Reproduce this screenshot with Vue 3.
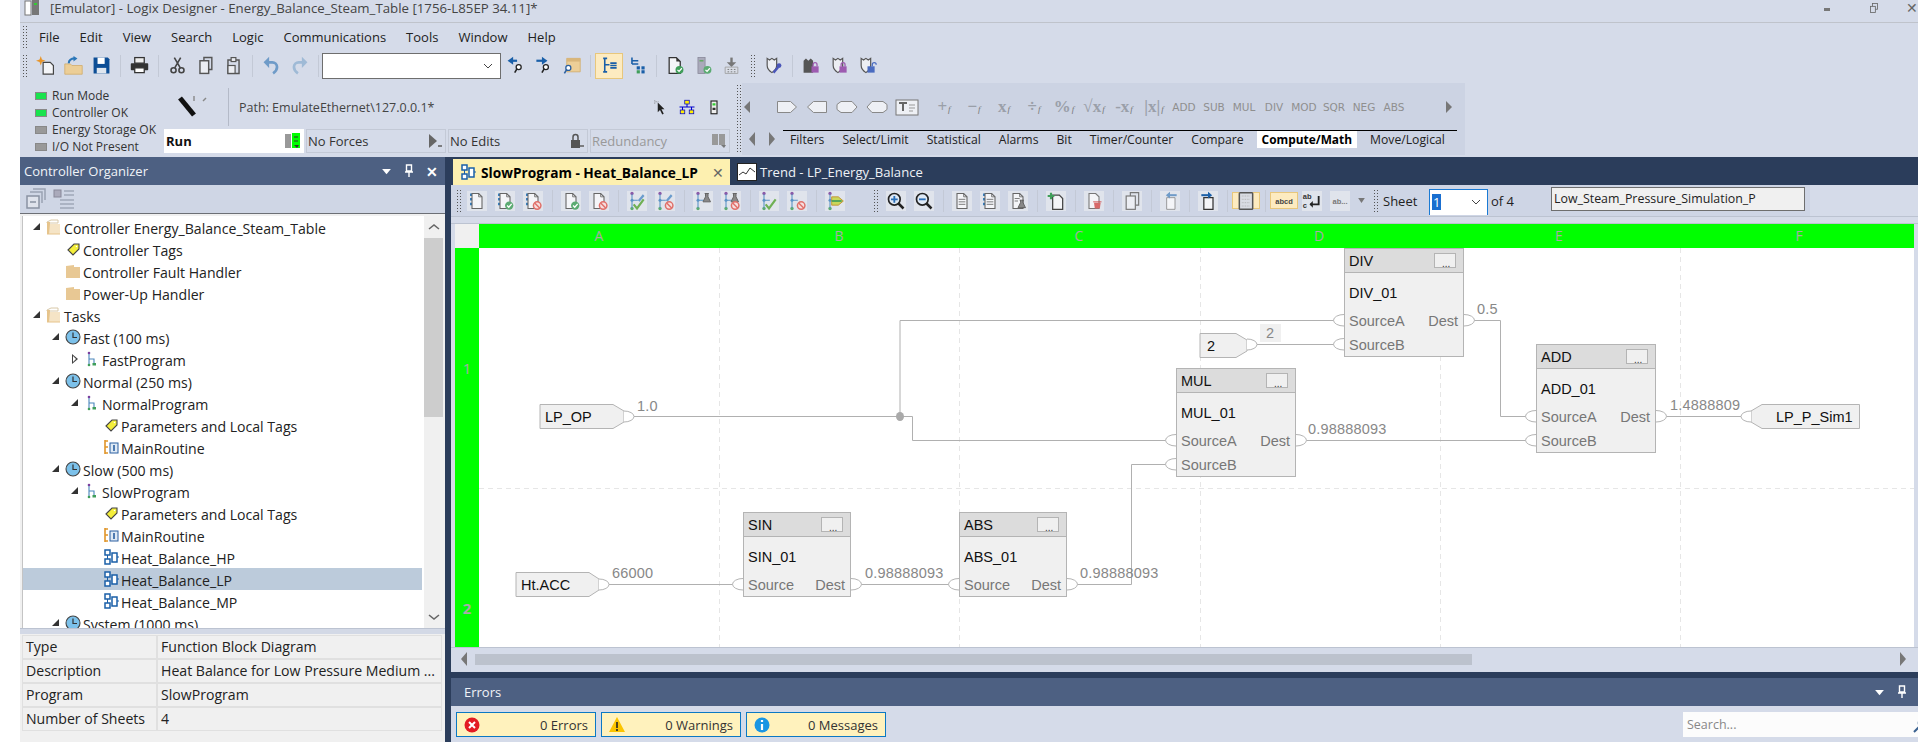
<template>
  <div class="app">
    <div class="window">
      <div class="title">
        <svg class="title-ic" viewBox="0 0 16 16"><rect x="1" y="1" width="6" height="14" fill="#fff" stroke="#777"/><rect x="8" y="0" width="7" height="15" fill="#777"/><rect x="10" y="3" width="3" height="2" fill="#3c3"/></svg>
        <span class="title-text">[Emulator] - Logix Designer - Energy_Balance_Steam_Table [1756-L85EP 34.11]*</span>
        <div class="win-btns">
          <span class="min"></span>
          <svg class="rest" viewBox="0 0 10 12"><rect x="3" y="0.5" width="6" height="7" fill="none" stroke="#666"/><rect x="0.5" y="4" width="6" height="7.5" fill="#d5dbe9" stroke="#666"/></svg>
          <span class="close">✕</span>
        </div>
      </div>

      <div class="menu">
        <span class="grip"></span>
        <span v-for="m in menus" :key="m" class="menu-item">{{ m }}</span>
      </div>

      <div class="toolbar">
        <span class="grip"></span>
        <template v-for="(t, i) in mainTools" :key="i">
          <span v-if="t === '|'" class="sep"></span>
          <span v-else-if="t === '#'" class="grip tool-grip"></span>
          <div v-else-if="t === 'combo'" class="combo"><svg viewBox="0 0 10 6"><path d="M1 1l4 4 4-4" fill="none" stroke="#444"/></svg></div>
          <span v-else class="btn" :class="{ on: t === 'treeSel' }"><svg class="ic" viewBox="0 0 24 24" v-html="icons[t]"></svg></span>
        </template>
      </div>

      <div class="status-row">
        <div class="status">
          <div class="lights">
            <div v-for="l in lights" :key="l.label" class="light"><i :class="{ green: l.on }"></i>{{ l.label }}</div>
          </div>
          <div class="status-main">
            <div class="status-top">
              <svg class="keyswitch" viewBox="0 0 30 24"><path d="M2 3l14 17" stroke="#111" stroke-width="5"/><path d="M16 1v5" stroke="#888" stroke-width="1.4"/><path d="M28 3l-3 3" stroke="#888" stroke-width="1.4"/></svg>
              <span class="vline"></span>
              <span class="path">Path: EmulateEthernet\127.0.0.1*</span>
              <div class="path-icons">
                <svg class="ic" viewBox="0 0 24 24"><path d="M9 6l0 13 3-3 3 6 2-1-3-6 4 0z" fill="#222"/><path d="M5 5h6M5 3v5" stroke="#777" stroke-dasharray="1 1"/></svg>
                <svg class="ic" viewBox="0 0 24 24"><rect x="9" y="3" width="6" height="5" fill="#fe0" stroke="#00c"/><rect x="3" y="16" width="6" height="5" fill="#fe0" stroke="#00c"/><rect x="15" y="16" width="6" height="5" fill="#fe0" stroke="#00c"/><path d="M12 8v4M2 12h20M6 12v4M18 12v4" stroke="#00c" stroke-width="1.4" fill="none"/></svg>
                <svg class="ic" viewBox="0 0 24 24"><rect x="8" y="4" width="8" height="17" fill="#eee" stroke="#222" stroke-width="1.5"/><rect x="10" y="7" width="4" height="3" fill="#3c3"/><rect x="10" y="13" width="4" height="3" fill="#333"/></svg>
              </div>
            </div>
            <div class="status-boxes">
              <div class="sbox run">Run<svg viewBox="0 0 16 16"><rect x="0" y="1" width="6" height="14" fill="#999"/><rect x="7" y="0" width="8" height="15" fill="#0f0"/><path d="M9 4h4M9 8h4" stroke="#333"/><path d="M9 12h5l-2 3z" fill="#333"/></svg></div>
              <div class="sbox">No Forces<svg viewBox="0 0 16 16"><path d="M2 1l8 7-8 7z" fill="#666"/><path d="M11 13h4" stroke="#666" stroke-width="1.6"/></svg></div>
              <div class="sbox">No Edits<svg viewBox="0 0 16 16"><rect x="2" y="7" width="9" height="8" fill="#555"/><path d="M4 7V4a2.5 2.5 0 015 0v3" fill="none" stroke="#555" stroke-width="1.5"/><path d="M11 13h4" stroke="#666" stroke-width="1.6"/></svg></div>
              <div class="sbox off">Redundancy<svg viewBox="0 0 16 16"><rect x="1" y="1" width="6" height="11" fill="#999"/><rect x="8" y="1" width="6" height="11" fill="#999"/><path d="M10 12h5l-2 3z" fill="#777"/></svg></div>
            </div>
          </div>
        </div>
        <span class="grip status-grip"></span>
        <div class="palette">
          <div class="pal-top">
            <span class="tri-left"></span>
            <span v-for="s in shapes" :key="s" class="pal-item"><svg class="ic" viewBox="0 0 24 24" v-html="icons[s]"></svg></span>
            <span class="pal-gap"></span>
            <span v-for="m in mathOps" :key="m" class="pal-item math">{{ m }}<i>f</i></span>
            <span v-for="w in palWords" :key="w" class="pal-item word">{{ w }}</span>
            <span class="tri-right"></span>
          </div>
          <div class="pal-bottom">
            <div class="pal-arrows"><span class="tri-left big"></span><span class="tri-right big"></span></div>
            <div class="pal-tabs">
              <span v-for="t in palTabs" :key="t" class="pal-tab" :class="{ on: t === 'Compute/Math' }">{{ t }}</span>
            </div>
          </div>
        </div>
      </div>

      <div class="workspace">
        <div class="organizer">
          <div class="pane-head">
            <span>Controller Organizer</span>
            <div class="pane-btns">
              <svg viewBox="0 0 12 8" class="pb-arrow"><path d="M1 1h10L6 7z" fill="#fff"/></svg>
              <svg viewBox="0 0 10 14" class="pb-pin"><path d="M2.5 1h5v6h-5zM1 8h8M5 8v5" fill="none" stroke="#fff" stroke-width="1.4"/></svg>
              <span class="pb-x">✕</span>
            </div>
          </div>
          <div class="org-tools">
            <svg class="ic" viewBox="0 0 24 24"><path d="M9 2h12v11M6 5h12v11" fill="none" stroke="#9aa3b3" stroke-width="1.5"/><rect x="3" y="9" width="12" height="12" fill="#dfe3ec" stroke="#8a93a3" stroke-width="1.5"/><path d="M6 15h6" stroke="#8a93a3" stroke-width="1.5"/></svg>
            <svg class="ic" viewBox="0 0 24 24"><rect x="2" y="3" width="7" height="7" fill="#aab" stroke="#889"/><path d="M12 4h10M12 8h10M8 13h14M8 17h14M8 21h14" stroke="#a0a8b8" stroke-width="1.6"/></svg>
          </div>
          <div class="tree-pane">
            <div class="tree">
              <div v-for="(r, i) in treeRows" :key="i" class="row" :class="{ sel: r.sel }" :style="{ paddingLeft: 8 + r.level * 19 + 'px' }">
                <span class="twisty" :class="r.tw"></span>
                <svg class="tree-ic" viewBox="0 0 16 16" v-html="treeIcons[r.icon]"></svg>
                <span class="row-text">{{ r.text }}</span>
              </div>
            </div>
            <div class="vscroll">
              <svg viewBox="0 0 12 8"><path d="M1 6l5-4 5 4" fill="none" stroke="#666" stroke-width="1.6"/></svg>
              <div class="vtrack"><div class="vthumb"></div></div>
              <svg viewBox="0 0 12 8"><path d="M1 2l5 4 5-4" fill="none" stroke="#666" stroke-width="1.6"/></svg>
            </div>
          </div>
          <div class="splitter"></div>
          <div class="props">
            <template v-for="p in props" :key="p[0]">
              <div class="cell">{{ p[0] }}</div>
              <div class="cell">{{ p[1] }}</div>
            </template>
          </div>
        </div>

        <div class="right">
          <div class="tabs">
            <div class="tab active">
              <svg class="tab-ic" viewBox="0 0 16 16" v-html="treeIcons.fbd"></svg>
              <span class="tab-text">SlowProgram - Heat_Balance_LP</span>
              <span class="tab-x">✕</span>
            </div>
            <div class="tab">
              <svg class="trend-ic" viewBox="0 0 20 18"><rect x="0.5" y="0.5" width="19" height="17" fill="#fff" stroke="#222"/><path d="M2 12l4-3 3 2 4-6 5 4" fill="none" stroke="#333"/></svg>
              <span>Trend - LP_Energy_Balance</span>
            </div>
          </div>

          <div class="editor-top">
            <div class="edit-tools">
              <span class="grip"></span>
              <template v-for="(t, i) in editTools" :key="i">
                <span v-if="t === '|'" class="sep"></span>
                <span v-else-if="t === '#'" class="grip tool-grip"></span>
                <span v-else-if="t === '_'" class="tool-end"></span>
                <span v-else class="btn light" :class="{ on: t === 'grid' || t === 'abcd' }"><svg class="ic" viewBox="0 0 24 24" v-html="icons[t]"></svg></span>
              </template>
              <svg class="mini-arrow" viewBox="0 0 8 6"><path d="M0 0h8L4 6z" fill="#777"/></svg>
              <span class="grip tool-grip sheet-grip"></span>
              <span class="sheet-label">Sheet</span>
              <div class="sheet-combo"><b>1</b><svg viewBox="0 0 10 6"><path d="M1 1l4 4 4-4" fill="none" stroke="#444"/></svg></div>
              <span class="sheet-of">of 4</span>
              <div class="sheet-name">Low_Steam_Pressure_Simulation_P</div>
            </div>
          </div>
          <div class="edit-rule"></div>

          <div class="sheet">
            <div class="corner"></div>
            <div class="ruler"><span v-for="c in columns" :key="c">{{ c }}</span></div>
            <div class="row-head"><span>1</span><span class="bold">2</span></div>
            <div class="canvas">
              <svg class="diagram" viewBox="479 248 1435 399" width="1435" height="399">
                <path v-for="x in gridX" :key="x" :d="`M${x} 248V647`" class="gridline" />
                <path d="M479 488.5H1914" class="gridline" />
                <path v-for="(w, i) in wires" :key="i" :d="w" class="wire" />
                <ellipse cx="900" cy="416.5" rx="4" ry="4.5" fill="#aaa" />

                <g v-for="r in refs" :key="r.text">
                  <path :d="r.d" class="ref" />
                  <path :d="r.pin" class="pin" />
                  <text :x="r.tx" :y="r.ty" class="tag">{{ r.text }}</text>
                </g>

                <rect x="1260" y="324" width="21" height="18" fill="#f0f0f0" />
                <text v-for="v in values" :key="v.x + '-' + v.y" :x="v.x" :y="v.y" class="val">{{ v.t }}</text>

                <g v-for="b in blocks" :key="b.name">
                  <rect :x="b.x + 0.5" :y="b.y + 0.5" :width="b.w" :height="b.h" class="block" />
                  <rect :x="b.x + 0.5" :y="b.y + 0.5" :width="b.w" height="24" class="block-head" />
                  <rect :x="b.x + b.w - 28.5" :y="b.y + 5.5" width="21" height="14" class="block-btn" />
                  <text :x="b.x + b.w - 21" :y="b.y + 19" class="dots">...</text>
                  <text :x="b.x + 5" :y="b.y + 18" class="tag">{{ b.name }}</text>
                  <text :x="b.x + 5" :y="b.y + 50" class="tag">{{ b.tag }}</text>
                  <template v-for="p in b.ins" :key="p.l">
                    <path :d="`M${b.x} ${p.y - 5.5}A10 5.5 0 0 0 ${b.x} ${p.y + 6}`" class="pin" />
                    <text :x="b.x + 5" :y="p.y + 6" class="pinlab">{{ p.l }}</text>
                  </template>
                  <path :d="`M${b.x + b.w + 1} ${b.out - 5.5}A10 5.5 0 0 1 ${b.x + b.w + 1} ${b.out + 6}`" class="pin" />
                  <text :x="b.x + b.w - 5" :y="b.out + 6" class="pinlab end">Dest</text>
                </g>
              </svg>
            </div>
          </div>

          <div class="hscroll">
            <span class="tri-left big"></span>
            <div class="htrack"><div class="hthumb"></div></div>
            <span class="tri-right big"></span>
          </div>

          <div class="errors">
            <div class="pane-head err-head">
              <span>Errors</span>
              <div class="pane-btns">
                <svg viewBox="0 0 12 8" class="pb-arrow"><path d="M1 1h10L6 7z" fill="#fff"/></svg>
                <svg viewBox="0 0 10 14" class="pb-pin"><path d="M2.5 1h5v6h-5zM1 8h8M5 8v5" fill="none" stroke="#fff" stroke-width="1.4"/></svg>
              </div>
            </div>
            <div class="err-row">
              <div class="err-btn">
                <svg viewBox="0 0 16 16"><circle cx="8" cy="8" r="7.5" fill="#e31b23"/><path d="M5 5l6 6M11 5l-6 6" stroke="#fff" stroke-width="2"/></svg>
                <span>0 Errors</span>
              </div>
              <div class="err-btn">
                <svg viewBox="0 0 16 16"><path d="M8 0l8 15H0z" fill="#fbc400"/><path d="M8 5v6M8 12v2" stroke="#222" stroke-width="1.6"/></svg>
                <span>0 Warnings</span>
              </div>
              <div class="err-btn">
                <svg viewBox="0 0 16 16"><circle cx="8" cy="8" r="7.5" fill="#1b96e3"/><path d="M8 3v2M8 7v6" stroke="#fff" stroke-width="2.2"/></svg>
                <span>0 Messages</span>
              </div>
              <div class="search">
                <span>Search...</span>
                <svg viewBox="0 0 16 16"><circle cx="11" cy="6" r="4.5" fill="none" stroke="#39608f" stroke-width="1.6"/><path d="M7.5 9.5L2 15" stroke="#39608f" stroke-width="2"/></svg>
              </div>
            </div>
          </div>
        </div>
      </div>
    </div>
  </div>
</template>

<script setup>
const menus = ['File', 'Edit', 'View', 'Search', 'Logic', 'Communications', 'Tools', 'Window', 'Help']

const mainTools = ['new', 'open', 'save', '|', 'print', '|', 'cut', 'copy', 'paste', '|', 'undo', 'redo', '|', 'combo', 'findPrev', 'findNext', 'findDir', '|', 'treeSel', 'tree2', '|', 'verify', 'verifyCtl', 'download', '#', 'shieldKey', '|', 'locks', 'lockShield', 'unlockShield']

const editTools = ['eAdd', 'eOk', 'eNo', '|', 'pOk', 'pNo', '|', 'sOk', 'sNo', '|', 'tOk', 'tNo', '|', 'aOk', 'aNo', '|', 'arrow', '_', '#', 'zoomIn', 'zoomOut', '|', 'doc', 'docDots', 'docTest', '|', 'pageAdd', '|', 'pageDel', '|', 'pages', '|', 'pageBack', '|', 'pageNext', '|', 'grid', '|', 'abcd', 'wrap', 'abMore']

const lights = [
  { label: 'Run Mode', on: true },
  { label: 'Controller OK', on: true },
  { label: 'Energy Storage OK', on: false },
  { label: 'I/O Not Present', on: false }
]

const shapes = ['refIn', 'refOut', 'wireIn', 'wireOut', 'textBox']
const mathOps = ['+', '−', 'x', '÷', '%', '√x', '-x', '|x|']
const palWords = ['ADD', 'SUB', 'MUL', 'DIV', 'MOD', 'SQR', 'NEG', 'ABS']
const palTabs = ['Filters', 'Select/Limit', 'Statistical', 'Alarms', 'Bit', 'Timer/Counter', 'Compare', 'Compute/Math', 'Move/Logical']

const treeRows = [
  { level: 0, tw: 'down', icon: 'open', text: 'Controller Energy_Balance_Steam_Table' },
  { level: 1, tw: '', icon: 'tag', text: 'Controller Tags' },
  { level: 1, tw: '', icon: 'folder', text: 'Controller Fault Handler' },
  { level: 1, tw: '', icon: 'folder', text: 'Power-Up Handler' },
  { level: 0, tw: 'down', icon: 'open', text: 'Tasks' },
  { level: 1, tw: 'down', icon: 'clock', text: 'Fast (100 ms)' },
  { level: 2, tw: 'closed', icon: 'prog', text: 'FastProgram' },
  { level: 1, tw: 'down', icon: 'clock', text: 'Normal (250 ms)' },
  { level: 2, tw: 'down', icon: 'prog', text: 'NormalProgram' },
  { level: 3, tw: '', icon: 'tag', text: 'Parameters and Local Tags' },
  { level: 3, tw: '', icon: 'routine', text: 'MainRoutine' },
  { level: 1, tw: 'down', icon: 'clock', text: 'Slow (500 ms)' },
  { level: 2, tw: 'down', icon: 'prog', text: 'SlowProgram' },
  { level: 3, tw: '', icon: 'tag', text: 'Parameters and Local Tags' },
  { level: 3, tw: '', icon: 'routine', text: 'MainRoutine' },
  { level: 3, tw: '', icon: 'fbd', text: 'Heat_Balance_HP' },
  { level: 3, tw: '', icon: 'fbd', text: 'Heat_Balance_LP', sel: true },
  { level: 3, tw: '', icon: 'fbd', text: 'Heat_Balance_MP' },
  { level: 1, tw: 'down', icon: 'clock', text: 'System (1000 ms)' }
]

const props = [
  ['Type', 'Function Block Diagram'],
  ['Description', 'Heat Balance for Low Pressure Medium ...'],
  ['Program', 'SlowProgram'],
  ['Number of Sheets', '4']
]

const columns = ['A', 'B', 'C', 'D', 'E', 'F']
const gridX = [719.5, 959.5, 1200.5, 1440.5, 1680.5]

const wires = [
  'M634 416.5H900M900 416.5V320.5H1334M900 416.5H912.5V440.5H1166',
  'M1257 344.5H1334',
  'M1473 320.5H1500.5V416.5H1526',
  'M1305 440.5H1526',
  'M1665 416.5H1741',
  'M609 584.5H734',
  'M860 584.5H950',
  'M1077 584.5H1131.5V464.5H1166'
]

const refs = [
  { text: 'LP_OP', d: 'M540 404.5H613L624 411V422L613 428.5H540Z', pin: 'M624 411A10 5.5 0 0 1 624 422', tx: 545, ty: 422 },
  { text: '2', d: 'M1200 333.5H1236L1247 340V351L1236 357.5H1200Z', pin: 'M1247 339A10 5.5 0 0 1 1247 350', tx: 1207, ty: 351 },
  { text: 'Ht.ACC', d: 'M516 572.5H589L599 579V590L589 596.5H516Z', pin: 'M599 579A10 5.5 0 0 1 599 590', tx: 521, ty: 590 },
  { text: 'LP_P_Sim1', d: 'M1751 411L1762 404.5H1859.5V428.5H1762L1751 422Z', pin: 'M1751 411A10 5.5 0 0 0 1751 422', tx: 1776, ty: 422 }
]

const values = [
  { t: '1.0', x: 637, y: 411 },
  { t: '2', x: 1266, y: 338 },
  { t: '0.5', x: 1477, y: 314 },
  { t: '0.98888093', x: 1308, y: 434 },
  { t: '1.4888809', x: 1670, y: 410 },
  { t: '66000', x: 612, y: 578 },
  { t: '0.98888093', x: 865, y: 578 },
  { t: '0.98888093', x: 1080, y: 578 }
]

const blocks = [
  { name: 'DIV', tag: 'DIV_01', x: 1344, y: 248, w: 119, h: 108, ins: [{ l: 'SourceA', y: 320 }, { l: 'SourceB', y: 344 }], out: 320 },
  { name: 'MUL', tag: 'MUL_01', x: 1176, y: 368, w: 119, h: 108, ins: [{ l: 'SourceA', y: 440 }, { l: 'SourceB', y: 464 }], out: 440 },
  { name: 'ADD', tag: 'ADD_01', x: 1536, y: 344, w: 119, h: 108, ins: [{ l: 'SourceA', y: 416 }, { l: 'SourceB', y: 440 }], out: 416 },
  { name: 'SIN', tag: 'SIN_01', x: 743, y: 512, w: 107, h: 84, ins: [{ l: 'Source', y: 584 }], out: 584 },
  { name: 'ABS', tag: 'ABS_01', x: 959, y: 512, w: 107, h: 84, ins: [{ l: 'Source', y: 584 }], out: 584 }
]

// shared bits for the toolbar pictures
const page = '<path d="M6 3h8l4 4v14H6z" fill="#f4f5f8" stroke="#666" stroke-width="1.3"/><path d="M14 3v4h4" fill="none" stroke="#666"/>'
const dash = '<path d="M5 3v15" stroke="#2a76b8" stroke-width="2.6" stroke-dasharray="3 2.5"/>'
const ok = '<circle cx="17" cy="17.5" r="5" fill="#5bab72"/><path d="M14.5 17.5l2 2 3.5-4" stroke="#fff" stroke-width="1.6" fill="none"/>'
const no = '<circle cx="17" cy="17.5" r="4.5" fill="#f6dede" stroke="#e0706a" stroke-width="1.8"/><path d="M14 14.5l6 6" stroke="#e0706a" stroke-width="1.8"/>'
const rung = '<circle cx="6" cy="3" r="2" fill="#8a5aa8"/><circle cx="6" cy="21" r="2" fill="#5bab72"/><path d="M6 4v16M6 11h7" stroke="#5c94c6" stroke-width="1.3" fill="none"/><circle cx="6" cy="11" r="1.8" fill="#5c94c6"/>'
const pencil = '<path d="M13 11l6-7 2 2-6 7z" fill="#6a9ccd"/>'
const flask = '<path d="M14 3h5M15 3v4l-3 6h9l-3-6V3" fill="#888" stroke="#666" stroke-width="1.2"/>'
const tick = '<path d="M8 16l4 5 8-11" fill="none" stroke="#6fb054" stroke-width="2.6"/>'
const shield = '<path d="M4 3l3 2 3-2 3 2 3-2v9c0 4-3 7-6 9-3-2-6-5-6-9z" fill="#eceef3" stroke="#555" stroke-width="1.5"/>'
const lock = (c) => `<rect x="12" y="13" width="9" height="8" fill="${c}"/><path d="M14 13v-2a2.5 2.5 0 015 0v2" fill="none" stroke="${c}" stroke-width="1.6"/>`
const mag = (x, y) => `<circle cx="${x}" cy="${y}" r="3.2" fill="#fff" stroke="#222" stroke-width="1.6"/><path d="M${x - 2} ${y + 2}l-3 5" stroke="#222" stroke-width="2"/>`
const bigMag = (sign) => `<circle cx="10" cy="10" r="7" fill="#dfe9f5" stroke="#222" stroke-width="2"/><path d="M15 15l6 6" stroke="#222" stroke-width="3"/><path d="${sign}" stroke="#2a6fb8" stroke-width="2.2"/>`

const icons = {
  new: '<path d="M9 8h9l4 4v11H9z" fill="#f4f5f8" stroke="#444" stroke-width="1.5"/><path d="M6 0l1.5 4.5L12 6 7.5 7.5 6 12 4.5 7.5 0 6l4.500-1.500z" fill="#e8952a"/>',
  open: '<path d="M1 10h7l2 2h13v11H1z" fill="#ecce97" stroke="#d1ab6b"/><path d="M6 9c0-3 3-6 7-6" fill="none" stroke="#2a76b8" stroke-width="2.6"/><path d="M12 0l5 3-5 4z" fill="#2a76b8"/>',
  save: '<path d="M2 2h18l2 2v18H2z" fill="#0d4e96"/><rect x="7" y="2" width="9" height="8" fill="#fff"/><rect x="6" y="15" width="12" height="7" fill="#dfe6ef"/>',
  print: '<rect x="6" y="2" width="12" height="7" fill="#eee" stroke="#333" stroke-width="1.6"/><rect x="1" y="9" width="22" height="9" rx="1" fill="#333"/><rect x="6" y="15" width="12" height="6" fill="#fff" stroke="#333" stroke-width="1.6"/>',
  cut: '<circle cx="7" cy="18" r="3.200" fill="none" stroke="#444" stroke-width="2"/><circle cx="17" cy="18" r="3.200" fill="none" stroke="#444" stroke-width="2"/><path d="M8.500 15L16 2M15.500 15L8 2" stroke="#444" stroke-width="2"/>',
  copy: '<path d="M10 6V2h10v15h-4" fill="none" stroke="#555" stroke-width="1.8"/><rect x="5" y="6" width="11" height="16" fill="#eceef3" stroke="#555" stroke-width="1.8"/>',
  paste: '<path d="M5 5h14v17H5z" fill="none" stroke="#555" stroke-width="1.8"/><rect x="9" y="2" width="6" height="5" fill="#eceef3" stroke="#555" stroke-width="1.5"/><rect x="5" y="12" width="9" height="10" fill="#eceef3" stroke="#555" stroke-width="1.5"/>',
  undo: '<path d="M6 8h7a6 6 0 016 6c0 3-2 6-5 8" fill="none" stroke="#6f9bc8" stroke-width="3.4"/><path d="M9 1L2 8l7 7z" fill="#6f9bc8"/>',
  redo: '<path d="M18 8h-7a6 6 0 00-6 6c0 3 2 6 5 8" fill="none" stroke="#9fbad6" stroke-width="3.4"/><path d="M15 1l7 7-7 7z" fill="#9fbad6"/>',
  findPrev: '<path d="M14 6H5" stroke="#1a5fa8" stroke-width="2.800"/><path d="M9 1L2 6l7 5z" fill="#1a5fa8"/>' + mag(16, 14),
  findNext: '<path d="M3 6h9" stroke="#1a5fa8" stroke-width="2.800"/><path d="M10 1l7 5-7 5z" fill="#1a5fa8"/>' + mag(15, 14),
  findDir: '<path d="M6 3h17v17H6z" fill="#ecce97" stroke="#d1ab6b"/><path d="M6 3h17v4H6z" fill="#d9b67a"/>' + mag(8, 15).replaceAll('#222', '#2a5fa0'),
  treeSel: '<path d="M4 3h5M6 3v17M4 20h5M6 11h6" fill="none" stroke="#1a5fa8" stroke-width="2"/><path d="M13 9h8M13 12h8M13 15h8" stroke="#1a5fa8" stroke-width="2"/>',
  tree2: '<path d="M5 2v8M5 6h8M5 10h8" stroke="#1a5fa8" stroke-width="2" fill="none"/><rect x="11" y="13" width="4" height="4" fill="#1a5fa8"/><rect x="17" y="13" width="4" height="4" fill="#1a5fa8"/><rect x="11" y="18" width="4" height="4" fill="#3f9e5a"/><rect x="17" y="18" width="4" height="4" fill="#1a5fa8"/>',
  verify: '<path d="M4 2h9l5 5v15H4z" fill="#f4f5f8" stroke="#333" stroke-width="1.6"/><path d="M13 2l5 5h-5z" fill="#333"/>' + ok.replace('#5bab72', '#3f9e5a'),
  verifyCtl: '<rect x="5" y="2" width="9" height="20" fill="#aab" stroke="#889"/><rect x="7" y="5" width="5" height="2" fill="#6a6"/>' + ok,
  download: '<path d="M12 2v8" stroke="#777" stroke-width="3"/><path d="M6 8h12l-6 6z" fill="#777"/><path d="M4 14h16v8H4z" fill="#d9dde6" stroke="#999"/><path d="M7 17h2M11 17h2M15 17h2M7 20h2M11 20h2M15 20h2" stroke="#666"/>',
  shieldKey: shield + '<path d="M12 21l6-7" stroke="#4a55b8" stroke-width="3"/><circle cx="19" cy="12" r="3" fill="#4a55b8"/>',
  locks: '<path d="M2 6l3-3 3 3 3-3 3 3v15H2z" fill="#555"/>' + lock('#9d5bb0'),
  lockShield: shield + lock('#9d5bb0'),
  unlockShield: shield + '<rect x="12" y="13" width="9" height="8" fill="#4a6bc0"/><path d="M18 13v-2a2.5 2.5 0 015 0" fill="none" stroke="#4a6bc0" stroke-width="1.6"/>',
  refIn: '<path d="M2.5 6.500h13l6 5.500-6 5.500h-13z" fill="#eef0f5" stroke="#888"/>',
  refOut: '<path d="M21.500 6.500h-13l-6 5.500 6 5.500h13z" fill="#eef0f5" stroke="#888"/>',
  wireIn: '<path d="M6 6.500h11l5 5.500-5 5.500H6l-4-3v-5z" fill="#eef0f5" stroke="#888"/>',
  wireOut: '<path d="M18 6.500H7l-5 5.500 5 5.500h11l4-3v-5z" fill="#eef0f5" stroke="#888"/>',
  textBox: '<rect x="1" y="5" width="22" height="15" fill="#eef0f5" stroke="#777"/><path d="M4 8h8M8 8v8" stroke="#666" stroke-width="2"/><path d="M14 10h6M14 13h6M14 16h4" stroke="#999"/>',
  eAdd: dash + page,
  eOk: dash + page + ok,
  eNo: dash + page + no,
  pOk: page + ok,
  pNo: page + no,
  sOk: rung + pencil + tick,
  sNo: rung + pencil + no,
  tOk: rung + flask,
  tNo: rung + flask + no,
  aOk: rung + tick,
  aNo: rung + no,
  arrow: rung + '<path d="M8 7h8l6 5-6 5H8z" fill="#c9d75a" stroke="#c08a2a"/><path d="M8 12h12" stroke="#3f9e5a" stroke-width="2"/>',
  zoomIn: bigMag('M6 10h8M10 6v8'),
  zoomOut: bigMag('M6 10h8'),
  doc: page + '<path d="M8 10h8M8 13h8M8 16h8" stroke="#666"/>',
  docDots: dash + page + '<path d="M8 10h8M8 13h8M8 16h8" stroke="#666"/>',
  docTest: page + '<path d="M8 9h6M8 12h4" stroke="#666"/><path d="M14 11h5M15 11v3l-3 6h9l-3-6v-3" fill="#888" stroke="#555"/>',
  pageAdd: '<path d="M8 5h8l4 4v13H8z" fill="#f4f5f8" stroke="#444" stroke-width="1.500"/><path d="M2 6h8M6 2v8" stroke="#3f9e5a" stroke-width="2.600"/>',
  pageDel: '<path d="M6 3h8l4 4v14H6z" fill="#f4f5f8" stroke="#777" stroke-width="1.300"/><path d="M12 14h8l-1 7h-6z" fill="#d86a6a"/><path d="M11 13h10" stroke="#c44"/>',
  pages: '<path d="M10 6V2h10v15h-4" fill="none" stroke="#777" stroke-width="1.400"/><rect x="5" y="6" width="11" height="16" fill="#eceef3" stroke="#777" stroke-width="1.400"/>',
  pageBack: '<path d="M8 8h10v14H8z" fill="#f4f5f8" stroke="#888"/><path d="M20 5h-9" stroke="#6f9bc8" stroke-width="2.400"/><path d="M12 1L7 5l5 4z" fill="#6f9bc8"/>',
  pageNext: '<path d="M7 8h11v14H7z" fill="#f4f5f8" stroke="#333" stroke-width="1.500"/><path d="M4 5h9" stroke="#1a5fa8" stroke-width="2.400"/><path d="M12 1l5 4-5 4z" fill="#1a5fa8"/>',
  grid: '<rect x="4" y="2" width="16" height="20" rx="1" fill="#d9dce3" stroke="#555" stroke-width="1.800"/><path d="M7 6h10M7 10h10M7 14h10M7 18h10" stroke="#aaa" stroke-dasharray="1 1"/>',
  abcd: '<text x="12" y="15" text-anchor="middle" font-family="Liberation Sans" font-size="9" font-weight="700" fill="#444">abcd</text>',
  wrap: '<text x="1" y="10" font-family="Liberation Sans" font-size="9" font-weight="700" fill="#333">ab</text><text x="1" y="20" font-family="Liberation Sans" font-size="9" font-weight="700" fill="#333">c</text><path d="M20 6v10H10" fill="none" stroke="#222" stroke-width="2.200"/><path d="M13 12l-4 4 4 4z" fill="#222"/>',
  abMore: '<text x="12" y="15" text-anchor="middle" font-family="Liberation Sans" font-size="9" font-weight="700" fill="#777">ab...</text>'
}

const treeIcons = {
  open: '<path d="M1 3l4-2h7v3H1z" fill="#fff" stroke="#d8c8a8"/><path d="M1 3h3v12H1z" fill="#e6c48c"/><path d="M4 5h10v10H3z" fill="#f5e4c6"/><path d="M1 15h13" stroke="#e6c48c"/>',
  folder: '<path d="M1 3l8-1v2h6v11H1z" fill="#e8c894"/>',
  tag: '<path d="M3 9l6-6h5v5l-6 6z" fill="#f4ee3a" stroke="#444" stroke-width="1.1"/><circle cx="11.500" cy="5.500" r="0.800" fill="#fff"/>',
  clock: '<circle cx="8" cy="8" r="7" fill="#7cc1ea" stroke="#444" stroke-width="1.100"/><path d="M8 3.500V8.500H12" fill="none" stroke="#333" stroke-width="1.200"/>',
  prog: '<circle cx="5" cy="2" r="1.300" fill="#7a3f9e"/><path d="M5 3v10M5 8h5v4" fill="none" stroke="#4a86bc" stroke-width="1.100"/><circle cx="5" cy="14" r="1.300" fill="#3f9e5a"/><rect x="8.500" y="12" width="3.500" height="2.500" fill="#3f9e5a"/>',
  routine: '<path d="M2 1v14M2 2h3M2 8h3M2 14h3" fill="none" stroke="#e0952a" stroke-width="1.600"/><rect x="7" y="4" width="8" height="10" fill="#dfeaf5" stroke="#2a5fa0"/><path d="M11 6v6" stroke="#2a5fa0" stroke-width="1.600"/>',
  fbd: '<rect x="2" y="1" width="5" height="5" fill="#fff" stroke="#1a5fa8" stroke-width="1.500"/><rect x="2" y="10" width="5" height="5" fill="#fff" stroke="#1a5fa8" stroke-width="1.500"/><rect x="9" y="4" width="5" height="9" fill="#fff" stroke="#1a5fa8" stroke-width="1.500"/><path d="M4.500 6v4M14 8h2" stroke="#1a5fa8"/>'
}
</script>

<style>
html,
body {
  margin: 0;
  background: #fff;
  overflow: hidden;
}
</style>

<style scoped>
.app {
  width: 1918px;
  height: 742px;
  padding-left: 20px;
  box-sizing: border-box;
  background: #fff;
  overflow: hidden;
  font-family: 'Open Sans', sans-serif;
  font-size: 13px;
  color: #222;
}

.window {
  width: 1898px;
  height: 742px;
  display: flex;
  flex-direction: column;
  background: #d5dbe9;
}

.title {
  height: 23px;
  box-sizing: border-box;
  border-bottom: 1px solid #bfc3cb;
  display: flex;
  align-items: flex-start;
  padding-left: 4px;
  color: #444;
  font-size: 13.25px;
  line-height: 16px;
  flex: none;
}

.title-ic {
  width: 16px;
  height: 16px;
  margin-right: 10px;
}

.win-btns {
  margin-left: auto;
  display: flex;
  align-items: center;
  width: 94px;
  overflow: hidden;
  color: #666;
}

.min {
  width: 7px;
  height: 3px;
  background: #777;
  margin-top: 3px;
}

.rest {
  width: 10px;
  height: 12px;
  margin-left: 40px;
}

.close {
  margin-left: 28px;
  font-size: 14px;
}

.menu {
  height: 27px;
  display: flex;
  align-items: center;
  flex: none;
}

.menu-item {
  margin-left: 20px;
  font-size: 13px;
  color: #222;
}

.menu .grip + .menu-item {
  margin-left: 12px;
}

.grip {
  width: 5px;
  height: 24px;
  margin-left: 2px;
  flex: none;
  background-image: radial-gradient(#555 0.7px, transparent 0.9px);
  background-size: 3px 3px;
}

.toolbar {
  height: 34px;
  box-sizing: border-box;
  padding-bottom: 3px;
  display: flex;
  align-items: center;
  flex: none;
}

.toolbar > .grip:first-child {
  margin-right: 4px;
}

.toolbar .ic {
  width: 19px;
  height: 19px;
}

.btn {
  width: 28px;
  height: 26px;
  flex: none;
  display: flex;
  align-items: center;
  justify-content: center;
  box-sizing: border-box;
}

.btn.on {
  background: #fdebc0;
  border: 1px solid #e8c77c;
}

.ic {
  width: 24px;
  height: 24px;
  display: block;
  flex: none;
}

.sep {
  width: 10px;
  height: 26px;
  flex: none;
  position: relative;
}

.sep::after {
  content: '';
  position: absolute;
  left: 5px;
  top: 2px;
  bottom: 2px;
  width: 1px;
  background: #c3c9d6;
}

.tool-grip {
  margin: 0 4px 0 5px;
}

.combo {
  width: 179px;
  height: 26px;
  box-sizing: border-box;
  background: #fff;
  border: 1px solid #6e6e6e;
  display: flex;
  align-items: center;
  justify-content: flex-end;
  padding-right: 7px;
  flex: none;
  margin-left: -1px;
}

.combo svg,
.sheet-combo svg {
  width: 10px;
  height: 6px;
}

.status-row {
  height: 73px;
  display: flex;
  flex: none;
}

.status {
  width: 712px;
  height: 70px;
  display: grid;
  grid-template-columns: 144px 1fr;
  flex: none;
}

.lights {
  padding: 3px 0 0 15px;
  font-size: 12px;
  color: #333;
}

.light {
  height: 17px;
  display: flex;
  align-items: center;
  white-space: nowrap;
}

.light i {
  width: 10px;
  height: 6px;
  margin-right: 5px;
  border: 1px solid #888;
  background: #999;
}

.light i.green {
  background: #19e34e;
}

.status-main {
  display: flex;
  flex-direction: column;
}

.status-top {
  height: 45px;
  display: flex;
  align-items: center;
  flex: none;
}

.keyswitch {
  width: 30px;
  height: 24px;
  margin: 0 0 0 14px;
}

.vline {
  width: 1px;
  height: 38px;
  background: #b4bac8;
  margin-left: 20px;
}

.path {
  margin-left: 10px;
  color: #444;
  font-size: 12.5px;
  padding-top: 2px;
}

.path-icons {
  margin-left: auto;
  display: flex;
  gap: 9px;
  margin-right: 9px;
}

.path-icons .ic {
  width: 18px;
  height: 18px;
}

.status-boxes {
  display: flex;
  gap: 2px;
  height: 24px;
}

.sbox {
  width: 140px;
  box-sizing: border-box;
  display: flex;
  align-items: center;
  justify-content: space-between;
  padding: 0 2px 0 1px;
  border: 1px solid #c3c9d6;
  font-size: 13px;
  color: #333;
}

.sbox svg {
  width: 16px;
  height: 16px;
}

.sbox.run {
  background: #fff;
  border-color: #fff;
  font-weight: 700;
  color: #111;
}

.sbox.off {
  color: #999;
}

.status-grip {
  width: 5px;
  height: 70px;
  margin-left: 4px;
}

.palette {
  width: 723px;
  height: 72px;
  margin: -1px 0 0 1px;
  background: #ccd3e3;
  display: flex;
  flex-direction: column;
}

.pal-top {
  height: 47px;
  display: flex;
  align-items: center;
  position: relative;
  padding-left: 30px;
}

.pal-top .tri-left {
  position: absolute;
  left: 2px;
  top: 18px;
}

.pal-top .tri-right {
  position: absolute;
  right: 13px;
  top: 18px;
}

.tri-left,
.tri-right {
  width: 0;
  height: 0;
  border-top: 6px solid transparent;
  border-bottom: 6px solid transparent;
  flex: none;
}

.tri-left {
  border-right: 6px solid #777;
}

.tri-right {
  border-left: 6px solid #777;
}

.tri-left.big,
.tri-right.big {
  border-top-width: 7px;
  border-bottom-width: 7px;
}

.pal-item {
  width: 30px;
  flex: none;
  display: flex;
  justify-content: center;
  align-items: baseline;
}

.pal-gap {
  width: 7px;
}

.math {
  font-family: 'Liberation Serif', serif;
  font-weight: 700;
  font-size: 17px;
  color: #9a9fa9;
}

.math i {
  font-size: 9px;
  font-weight: 400;
  color: #777;
  margin-left: 1px;
}

.word {
  font-size: 10.5px;
  font-family: 'DejaVu Sans', sans-serif;
  color: #8f8f8f;
}

.pal-bottom {
  height: 18px;
  display: flex;
}

.pal-arrows {
  width: 41px;
  display: flex;
  gap: 14px;
  align-items: center;
  padding-left: 7px;
  box-sizing: border-box;
}

.pal-tabs {
  width: 674px;
  border-top: 1px solid #000;
  display: flex;
  padding-left: 7px;
  box-sizing: border-box;
  gap: 18px;
  font-size: 12.2px;
  line-height: 17px;
  white-space: nowrap;
  color: #222;
}

.pal-tab.on {
  background: #fff;
  font-weight: 700;
  font-size: 11.9px;
  color: #000;
  padding: 0 5px;
  margin: 0 -5px;
}

.workspace {
  flex: 1;
  min-height: 0;
  display: flex;
  gap: 6px;
  background: #2b3d5b;
}

.organizer {
  width: 425px;
  flex: none;
  display: flex;
  flex-direction: column;
  background: #f0f0f0;
}

.pane-head {
  height: 28px;
  flex: none;
  background: #4d6082;
  color: #f0f3f8;
  display: flex;
  align-items: center;
  justify-content: space-between;
  padding-left: 4px;
  font-size: 13px;
}

.pane-btns {
  display: flex;
  align-items: center;
  gap: 12px;
  padding-right: 7px;
  color: #fff;
}

.pb-arrow {
  width: 11px;
  height: 7px;
}

.pb-pin {
  width: 10px;
  height: 14px;
}

.pb-x {
  font-size: 14px;
  font-weight: 700;
}

.org-tools {
  height: 29px;
  flex: none;
  background: #cfd6e5;
  border-bottom: 1px solid #6c6f75;
  display: flex;
  align-items: center;
  padding-left: 4px;
  gap: 4px;
  box-sizing: border-box;
}

.tree-pane {
  height: 412px;
  flex: none;
  margin: 2px 2px 0 2px;
  display: flex;
  background: #fff;
  border-left: 1px solid #c4c4c4;
  overflow: hidden;
}

.tree {
  width: 399px;
  flex: none;
  overflow: hidden;
}

.row {
  height: 22px;
  display: flex;
  align-items: center;
  font-size: 14.1px;
  color: #222;
  white-space: nowrap;
}

.row.sel {
  background: #bccbdb;
}

.row-text {
  padding-top: 2px;
}

.twisty {
  width: 12px;
  height: 12px;
  flex: none;
  position: relative;
}

.twisty.down::after {
  content: '';
  position: absolute;
  left: 2px;
  top: 2px;
  border-bottom: 7px solid #333;
  border-left: 7px solid transparent;
}

.twisty.closed::after {
  content: '';
  position: absolute;
  left: 3px;
  top: 1px;
  border-left: 6px solid #444;
  border-top: 5px solid transparent;
  border-bottom: 5px solid transparent;
}

.twisty.closed::before {
  content: '';
  position: absolute;
  z-index: 1;
  left: 4px;
  top: 3px;
  border-left: 3px solid #fff;
  border-top: 3px solid transparent;
  border-bottom: 3px solid transparent;
}

.tree-ic {
  width: 16px;
  height: 16px;
  margin: 0 2px 0 3px;
  flex: none;
}

.vscroll {
  width: 19px;
  margin-left: auto;
  background: #f0f0f0;
  display: flex;
  flex-direction: column;
  align-items: center;
}

.vscroll svg {
  width: 12px;
  height: 8px;
  flex: none;
  margin: 7px 0;
}

.vtrack {
  width: 100%;
  flex: 1;
}

.vthumb {
  height: 179px;
  background: #cdcdcd;
}

.splitter {
  height: 6px;
  flex: none;
  background: #d3d9e6;
  border-top: 1px solid #bcc3d1;
  box-sizing: border-box;
}

.props {
  display: grid;
  grid-template-columns: 133px 1fr;
  grid-auto-rows: 22px;
  gap: 2px;
  padding: 2px 4px 0 3px;
}

.cell {
  background: #f0f0f0;
  outline: 1px solid #e0e0e0;
  padding-left: 3px;
  font-size: 14.1px;
  line-height: 22px;
  color: #222;
  white-space: nowrap;
  overflow: hidden;
}

.right {
  flex: 1;
  min-width: 0;
  display: flex;
  flex-direction: column;
  background: #d5dbe9;
}

.tabs {
  height: 28px;
  flex: none;
  background: #2b3d5b;
  display: flex;
  align-items: flex-end;
  padding-left: 2px;
  gap: 7px;
  color: #eef1f6;
}

.tab {
  height: 26px;
  display: flex;
  align-items: center;
  font-size: 13.1px;
}

.tab.active {
  width: 277px;
  background: #fdf0b0;
  color: #000;
  font-size: 13.7px;
  font-weight: 700;
  padding-left: 7px;
  box-sizing: border-box;
}

.tab-ic {
  width: 16px;
  height: 18px;
  margin-right: 5px;
}

.tab-x {
  margin-left: auto;
  margin-right: 6px;
  font-weight: 400;
  color: #666;
}

.trend-ic {
  width: 20px;
  height: 18px;
  margin-right: 3px;
}

.editor-top {
  height: 31px;
  flex: none;
}

.edit-tools {
  width: 1359px;
  height: 31px;
  background: #ced5e5;
  display: flex;
  align-items: center;
  padding-left: 3px;
  box-sizing: border-box;
}

.edit-tools > .grip:first-child {
  margin: 0 2px 0 2px;
}

.tool-end {
  width: 19px;
  flex: none;
}

.btn.light {
  width: 28px;
}

.btn.light .ic {
  background: #e0e4ec;
  width: 20px;
  height: 20px;
}

.btn.light.on .ic {
  background: none;
}

.mini-arrow {
  width: 7px;
  height: 5px;
  margin-left: 4px;
  flex: none;
}

.sheet-grip {
  margin-left: 8px;
  margin-right: 0;
}

.sheet-label {
  margin-left: 5px;
  width: 46px;
  flex: none;
}

.sheet-combo {
  width: 59px;
  height: 26px;
  background: #fff;
  border: 1px solid #1a7ad4;
  border-bottom: 0;
  box-sizing: border-box;
  display: flex;
  align-items: center;
  justify-content: space-between;
  padding: 0 6px 0 2px;
  flex: none;
  margin-top: 2px;
}

.sheet-combo b {
  background: #1a6fd0;
  color: #fff;
  font-weight: 400;
  padding: 0 1px;
  line-height: 16px;
}

.sheet-of {
  margin-left: 3px;
  width: 60px;
  flex: none;
}

.sheet-name {
  width: 254px;
  height: 24px;
  box-sizing: border-box;
  background: #f0f0f0;
  border: 1px solid #6e6e6e;
  line-height: 22px;
  padding-left: 2px;
  font-size: 12.4px;
  white-space: nowrap;
  overflow: hidden;
  flex: none;
  color: #222;
  margin-bottom: 3px;
}

.edit-rule {
  height: 8px;
  flex: none;
  border-top: 1px solid #bcc3d1;
  border-bottom: 1px solid #bcc3d1;
  box-sizing: border-box;
}

.sheet {
  margin-left: 4px;
  width: 1459px;
  height: 423px;
  flex: none;
  display: grid;
  grid-template-columns: 24px 1435px;
  grid-template-rows: 24px 399px;
  overflow: hidden;
}

.corner {
  background: #f0f0f0;
}

.ruler {
  background: #00ff00;
  display: grid;
  grid-template-columns: repeat(6, 240px);
  font-size: 14px;
  color: #a9a9a9;
  line-height: 24px;
  text-align: center;
}

.row-head {
  background: #00ff00;
  color: #a9a9a9;
  font-size: 15px;
  display: flex;
  flex-direction: column;
  align-items: center;
  overflow: hidden;
}

.row-head span {
  height: 240px;
  flex: none;
  display: flex;
  align-items: center;
}

.row-head .bold {
  font-weight: 700;
}

.canvas {
  background: #fff;
  overflow: hidden;
}

.diagram {
  display: block;
  font-family: 'Liberation Sans', sans-serif;
  font-size: 14.5px;
}

.gridline {
  stroke: #e6e6e6;
  stroke-dasharray: 5 4;
  fill: none;
}

.wire {
  stroke: #b0b0b0;
  fill: none;
}

.ref {
  fill: #f0f0f0;
  stroke: #b4b4b4;
}

.pin {
  fill: #fff;
  stroke: #b4b4b4;
}

.block {
  fill: #f0f0f0;
  stroke: #b4b4b4;
}

.block-head {
  fill: #dcdcdc;
  stroke: #b4b4b4;
}

.block-btn {
  fill: #f0f0f0;
  stroke: #b4b4b4;
}

.dots {
  fill: #333;
  font-size: 10px;
}

.tag {
  fill: #111;
}

.pinlab {
  fill: #777;
}

.pinlab.end {
  text-anchor: end;
}

.val {
  fill: #888;
  letter-spacing: 0.2px;
}

.hscroll {
  height: 23px;
  flex: none;
  display: flex;
  align-items: center;
  padding-left: 10px;
  box-sizing: border-box;
  border-top: 1px solid #bcc3d1;
}

.htrack {
  width: 1425px;
  flex: none;
  margin-left: 8px;
}

.hthumb {
  width: 997px;
  height: 11px;
  background: #bcc2cd;
}

.errors {
  margin-top: 2px;
  border-top: 6px solid #2b3d5b;
  flex: 1;
  min-height: 0;
  display: flex;
  flex-direction: column;
}

.err-head {
  padding-left: 13px;
}

.err-head .pane-btns {
  padding-right: 11px;
}

.err-row {
  flex: 1;
  display: flex;
  align-items: flex-start;
  padding: 6px 0 0 5px;
  gap: 5px;
}

.err-btn {
  width: 140px;
  height: 25px;
  box-sizing: border-box;
  border: 1px solid #0b78c4;
  background: #fff2bd;
  display: flex;
  align-items: center;
  justify-content: space-between;
  padding: 0 7px 0 7px;
  font-size: 13px;
  color: #333;
  flex: none;
}

.err-btn svg {
  width: 16px;
  height: 16px;
}

.search {
  margin-left: auto;
  width: 235px;
  height: 25px;
  background: #fcfcfc;
  display: flex;
  align-items: center;
  justify-content: space-between;
  padding-left: 4px;
  box-sizing: border-box;
  color: #888;
  font-size: 12.5px;
  overflow: hidden;
}

.search svg {
  width: 16px;
  height: 16px;
  margin-right: -10px;
  flex: none;
}
</style>
